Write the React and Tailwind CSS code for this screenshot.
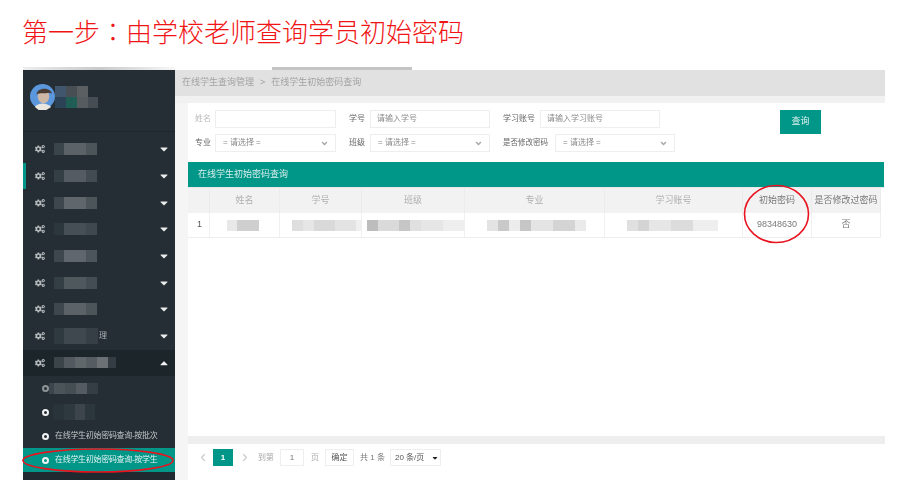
import React from "react";
import { FaCogs, FaCaretDown, FaCaretUp, FaAngleDown } from "react-icons/fa";
import { ChevronLeft, ChevronRight } from "lucide-react";

const cjk = "font-['Liberation_Sans','Noto_Sans_CJK_SC',sans-serif]";

function Blocks({ items, className = "" }) {
  return (
    <div className={`flex items-center ${className}`}>
      {items.map((b, i) => (
        <div key={i} className={b} />
      ))}
    </div>
  );
}

const navRows = [
  ["w-[10px] h-[12px] bg-[#3a454b]", "w-[22px] h-[12px] bg-[#5b6368]", "w-[11px] h-[12px] bg-[#4c555a]"],
  ["w-[10px] h-[12px] bg-[#343f45]", "w-[22px] h-[12px] bg-[#545c61]", "w-[11px] h-[12px] bg-[#424b51]"],
  ["w-[10px] h-[12px] bg-[#3d474d]", "w-[22px] h-[12px] bg-[#5f676c]", "w-[11px] h-[12px] bg-[#4c555a]"],
  ["w-[10px] h-[12px] bg-[#2c373d]", "w-[22px] h-[12px] bg-[#464f55]", "w-[11px] h-[12px] bg-[#3f484e]"],
  ["w-[10px] h-[12px] bg-[#3d474d]", "w-[22px] h-[12px] bg-[#5f676c]", "w-[11px] h-[12px] bg-[#4c555a]"],
  ["w-[10px] h-[12px] bg-[#343f45]", "w-[22px] h-[12px] bg-[#4f585d]", "w-[11px] h-[12px] bg-[#444d53]"],
  ["w-[10px] h-[12px] bg-[#3d474d]", "w-[22px] h-[12px] bg-[#5b6368]", "w-[11px] h-[12px] bg-[#4c555a]"],
];

function NavRow({ items, active, label }) {
  return (
    <div className="relative flex h-[26.7px] items-center pl-[12px] pr-[5px]">
      {active && <div className="absolute left-0 top-0 h-full w-[3px] bg-[#009688]" />}
      <FaCogs className="w-[10px] h-[10px] text-[#b4b9bc] mr-[9px] shrink-0" />
      <Blocks items={items} />
      {label && <span className={`text-[8px] text-[#a9aeb1] ml-[1px] ${cjk}`}>{label}</span>}
      <FaCaretDown className="ml-auto w-[12px] h-[12px] text-[#e8eaeb]" />
    </div>
  );
}

function Bullet({ dim }) {
  return (
    <span className={`w-[7px] h-[7px] rounded-full border-[2px] shrink-0 ${dim ? "border-[#8d9396]" : "border-[#f2f2f2]"}`} />
  );
}

function Sidebar() {
  return (
    <aside className="w-[152px] shrink-0 bg-[#242e34] flex flex-col">
      <div className="h-[62px] flex items-start pl-[7px] pt-[13px] border-b border-[#1e272c]">
        <svg viewBox="0 0 26 28" className="w-[25px] h-[27px] shrink-0">
          <circle cx="13" cy="14" r="13" fill="#5b97dc" />
          <path d="M5 25 C8 20 18 20 22 25 L17 28 L9 28 Z" fill="#e9e6df" />
          <ellipse cx="14" cy="14" rx="6" ry="7" fill="#cfb7a6" />
          <path d="M7 12 C6 5 21 3 23 11 L20 10 C15 11 11 10 9 11 Z" fill="#4a3c35" />
        </svg>
        <div className="flex flex-col mt-[3px]">
          <Blocks items={["w-[11px] h-[11px] bg-[#3f566d]", "w-[11px] h-[11px] bg-[#474f55]", "w-[11px] h-[11px] bg-[#5b5f62]"]} />
          <Blocks items={["w-[11px] h-[11px] bg-[#2c4355]", "w-[11px] h-[11px] bg-[#1f5d55]", "w-[11px] h-[11px] bg-[#565b5f]", "w-[10px] h-[11px] bg-[#474e53]"]} />
        </div>
      </div>
      <div className="h-[4px]" />
      <NavRow items={navRows[0]} />
      <NavRow items={navRows[1]} active />
      <NavRow items={navRows[2]} />
      <NavRow items={navRows[3]} />
      <NavRow items={navRows[4]} />
      <NavRow items={navRows[5]} />
      <NavRow items={navRows[6]} />
      <NavRow items={["w-[10px] h-[16px] bg-[#2f3a40]", "w-[22px] h-[16px] bg-[#3e484e]", "w-[12px] h-[16px] bg-[#353f45]"]} label="理" />
      <div className="flex h-[26.7px] items-center pl-[12px] pr-[5px] bg-[#1c252a]">
        <FaCogs className="w-[10px] h-[10px] text-[#b4b9bc] mr-[9px] shrink-0" />
        <Blocks items={["w-[10px] h-[11px] bg-[#3a4449]", "w-[11px] h-[11px] bg-[#525a5f]", "w-[11px] h-[11px] bg-[#5f676b]", "w-[11px] h-[11px] bg-[#565d62]", "w-[11px] h-[11px] bg-[#6b7175]", "w-[8px] h-[11px] bg-[#343d43]"]} />
        <FaCaretUp className="ml-auto w-[12px] h-[12px] text-[#f0f1f2]" />
      </div>
      <div className="flex h-[24px] items-center pl-[19px]">
        <Bullet dim />
        <Blocks items={["w-[5px] h-[11px] bg-[#3b454b]", "w-[11px] h-[11px] bg-[#4b5459]", "w-[11px] h-[11px] bg-[#454e53]", "w-[11px] h-[11px] bg-[#555c61]", "w-[11px] h-[11px] bg-[#343e44]"]} />
      </div>
      <div className="flex h-[24px] items-center pl-[19px] gap-[4px]">
        <Bullet />
        <Blocks items={["w-[11px] h-[16px] bg-[#29343a]", "w-[11px] h-[16px] bg-[#2e393f]", "w-[10px] h-[16px] bg-[#3b454b]", "w-[10px] h-[16px] bg-[#2c373d]"]} />
      </div>
      <div className="flex h-[24px] items-center pl-[19px] gap-[6px]">
        <Bullet />
        <span className={`text-[8px] tracking-[-0.3px] text-[#c2c6c8] whitespace-nowrap ${cjk}`}>在线学生初始密码查询-按批次</span>
      </div>
      <div className="flex h-[24px] items-center pl-[19px] gap-[6px] bg-[#009688]">
        <Bullet />
        <span className={`text-[8px] tracking-[-0.3px] text-[#e3f3f1] whitespace-nowrap ${cjk}`}>在线学生初始密码查询-按学生</span>
      </div>
      <div className="flex-1 bg-[#20292f]" />
    </aside>
  );
}

function Label({ className = "", children }) {
  return <span className={`whitespace-nowrap shrink-0 ${className}`}>{children}</span>;
}

function Input({ className = "", placeholder }) {
  return (
    <div className={`h-[18px] border border-[#eeeeee] bg-white flex items-center pl-[6px] text-[8px] text-[#8a8a8a] shrink-0 ${className}`}>
      {placeholder}
    </div>
  );
}

function Select({ className = "" }) {
  return (
    <div className={`h-[18px] border border-[#eeeeee] bg-white flex items-center pl-[7px] pr-[6px] text-[8px] text-[#8a8a8a] shrink-0 ${className}`}>
      <span>= 请选择 =</span>
      <FaAngleDown className="ml-auto w-[9px] h-[9px] text-[#a6a6a6]" />
    </div>
  );
}

function Form() {
  return (
    <div className="h-[59px] relative flex">
      <div className="flex flex-col">
        <div className="flex h-[18px] mt-[7px] items-center">
          <Label className="w-[27px] pl-[7px] text-[8px] text-[#bbb]">姓名</Label>
          <Input className="w-[121px]" />
          <Label className="w-[34px] pl-[13px] text-[8px] text-[#666]">学号</Label>
          <Input className="w-[120px]" placeholder="请输入学号" />
          <Label className="w-[50px] pl-[13px] text-[8px] text-[#666]">学习账号</Label>
          <Input className="w-[120px]" placeholder="请输入学习账号" />
        </div>
        <div className="flex h-[18px] mt-[6px] items-center">
          <Label className="w-[27px] pl-[7px] text-[8px] text-[#666]">专业</Label>
          <Select className="w-[121px]" />
          <Label className="w-[34px] pl-[13px] text-[8px] text-[#666]">班级</Label>
          <Select className="w-[120px]" />
          <Label className="w-[65px] pl-[13px] text-[7.5px] text-[#666]">是否修改密码</Label>
          <Select className="w-[120px]" />
        </div>
      </div>
      <button className="ml-[105px] mt-[7px] w-[41px] h-[24px] bg-[#009688] text-[#e3f3f1] text-[9px] flex items-center justify-center">
        查询
      </button>
    </div>
  );
}

const th = "h-full flex items-center justify-center text-[9px] border-r border-[#ebebeb]";
const td = "h-full flex items-center border-r border-[#f0f0f0] overflow-hidden";

function Table() {
  return (
    <div className="flex-1 flex flex-col">
      <div className="h-[26px] mr-[1px] bg-[#009688] text-[#d9efec] text-[9px] flex items-center pl-[10px] border-b border-[#e8e8e8]">
        在线学生初始密码查询
      </div>
      <div className="w-[693px] h-[25px] bg-[#f2f2f2] grid grid-cols-[22px_70px_82px_103px_140px_138px_69px_69px]">
        <div className={th} />
        <div className={`${th} text-[#b0b0b0]`}>姓名</div>
        <div className={`${th} text-[#b0b0b0]`}>学号</div>
        <div className={`${th} text-[#b0b0b0]`}>班级</div>
        <div className={`${th} text-[#b0b0b0]`}>专业</div>
        <div className={`${th} text-[#b0b0b0]`}>学习账号</div>
        <div className={`${th} text-[#777]`}>初始密码</div>
        <div className={`${th} text-[#777]`}>是否修改过密码</div>
      </div>
      <div className="w-[693px] h-[25px] bg-white border-b border-[#eeeeee] grid grid-cols-[22px_70px_82px_103px_140px_138px_69px_69px]">
        <div className={`${td} pl-[9px] text-[9px] text-[#555]`}>1</div>
        <div className={`${td} pl-[17px]`}>
          <Blocks items={["w-[10px] h-[11px] bg-[#e8e8e8]", "w-[22px] h-[11px] bg-[#cfcfcf]"]} />
        </div>
        <div className={`${td} pl-[12px]`}>
          <Blocks items={["w-[11px] h-[11px] bg-[#dedede]", "w-[11px] h-[11px] bg-[#e6e6e6]", "w-[21px] h-[11px] bg-[#d9d9d9]", "w-[21px] h-[11px] bg-[#e3e3e3]", "w-[11px] h-[11px] bg-[#f0f0f0]"]} />
        </div>
        <div className={`${td} pl-[5px]`}>
          <Blocks items={["w-[11px] h-[11px] bg-[#bdbdbd]", "w-[21px] h-[11px] bg-[#dadada]", "w-[11px] h-[11px] bg-[#c6c6c6]", "w-[11px] h-[11px] bg-[#e0e0e0]", "w-[22px] h-[11px] bg-[#e6e6e6]", "w-[21px] h-[11px] bg-[#eeeeee]"]} />
        </div>
        <div className={`${td} pl-[22px]`}>
          <Blocks items={["w-[11px] h-[11px] bg-[#e3e3e3]", "w-[11px] h-[11px] bg-[#c9c9c9]", "w-[11px] h-[11px] bg-[#ececec]", "w-[11px] h-[11px] bg-[#c6c6c6]", "w-[22px] h-[11px] bg-[#e4e4e4]", "w-[22px] h-[11px] bg-[#d4d4d4]", "w-[11px] h-[11px] bg-[#eaeaea]"]} />
        </div>
        <div className={`${td} pl-[22px]`}>
          <Blocks items={["w-[11px] h-[11px] bg-[#e0e0e0]", "w-[11px] h-[11px] bg-[#d4d4d4]", "w-[22px] h-[11px] bg-[#e6e6e6]", "w-[22px] h-[11px] bg-[#dcdcdc]", "w-[25px] h-[11px] bg-[#eeeeee]"]} />
        </div>
        <div className={`${td} justify-center text-[9px] text-[#7a7a7a]`}>98348630</div>
        <div className={`${td} justify-center text-[9px] text-[#777]`}>否</div>
      </div>
      <div className="flex-1" />
      <div className="h-[8px] bg-[#eeeeee]" />
      <Pagination />
    </div>
  );
}

function Pagination() {
  return (
    <div className="h-[36px] flex items-start pt-[5px] pl-[9px] text-[8px] text-[#777]">
      <ChevronLeft strokeWidth={2.2} className="w-[12px] h-[17px] text-[#c9c9c9] mr-[4px]" />
      <div className="w-[20px] h-[17px] bg-[#009688] text-white flex items-center justify-center font-bold">1</div>
      <ChevronRight strokeWidth={2.2} className="w-[12px] h-[17px] text-[#c9c9c9] ml-[6px] mr-[7px]" />
      <span className="h-[17px] leading-[17px] text-[#aaa] w-[22px]">到第</span>
      <div className="w-[24px] h-[17px] border border-[#eeeeee] flex items-center justify-center">1</div>
      <span className="h-[17px] leading-[17px] text-[#aaa] ml-[7px] w-[14px]">页</span>
      <div className="w-[29px] h-[17px] border border-[#eeeeee] flex items-center justify-center text-[#555]">确定</div>
      <span className="h-[17px] leading-[17px] ml-[6px] w-[30px]">共 1 条</span>
      <div className="w-[51px] h-[17px] border border-[#eeeeee] flex items-center pl-[4px] text-[#555] gap-[7px]">
        <span>20 条/页</span>
        <FaCaretDown className="w-[8px] h-[8px] text-[#222]" />
      </div>
    </div>
  );
}

export default function App() {
  return (
    <div className={`w-[900px] h-[501px] bg-white overflow-hidden relative ${cjk}`}>
      <div className="h-[67px] pl-[22px] pt-[12px] text-[26px] leading-[38px] text-[#f01414] font-light">
        第一步<span className="font-['Noto_Sans_CJK_TC',sans-serif]">：</span>由学校老师查询学员初始密码
      </div>
      <div className="ml-[23px] w-[862px] h-[3px] flex">
        <div className="w-[152px] bg-gradient-to-r from-[#eeeeee] via-[#c9c9c9] to-[#f7f7f7]" />
        <div className="w-[97px]" />
        <div className="w-[140px] bg-[#c4c4c4]" />
      </div>
      <div className="ml-[23px] w-[862px] h-[410px] flex blur-[0.55px]">
        <Sidebar />
        <main className="flex-1 flex flex-col bg-[#f5f5f5]">
          <div className="h-[26px] shrink-0 bg-[#e1e1e1] flex items-center pl-[7px] text-[9px] text-[#a3a3a3] gap-[6px]">
            <span>在线学生查询管理</span>
            <span>&gt;</span>
            <span>在线学生初始密码查询</span>
          </div>
          <div className="h-[7px] shrink-0 bg-[#f1f1f1]" />
          <div className="flex-1 ml-[13px] bg-white flex flex-col min-h-0">
            <Form />
            <Table />
          </div>
        </main>
      </div>
      <svg className="absolute left-0 top-0 pointer-events-none" width="900" height="501" fill="none">
        <ellipse cx="98" cy="460.5" rx="75" ry="11.5" stroke="#e8131f" strokeWidth="1.6" />
        <ellipse cx="776.5" cy="214" rx="32" ry="28.5" stroke="#e8131f" strokeWidth="1.6" />
      </svg>
    </div>
  );
}
